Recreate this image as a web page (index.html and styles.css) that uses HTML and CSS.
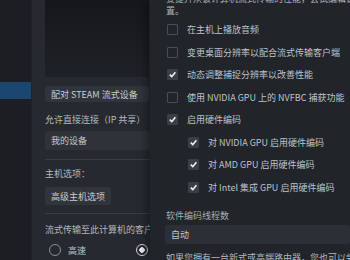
FILE: index.html
```html
<!DOCTYPE html>
<html lang="zh-CN">
<head>
    <meta charset="UTF-8">
    <title>远程畅玩设置</title>
    <link rel="stylesheet" href="styles.css">
</head>
<body>
    <div class="sidebar">
        <div class="nav-item"></div>
        <div class="nav-item"></div>
        <div class="nav-item active"></div>
    </div>

    <div class="page">
        <div class="qr-box"></div>
        <button class="btn pair">配对 STEAM 流式设备</button>
        <div class="label first">允许直接连接（IP 共享）</div>
        <div class="select">我的设备</div>
        <div class="sep"></div>
        <div class="label host">主机选项：</div>
        <button class="btn host-btn">高级主机选项</button>
        <div class="sep second"></div>
        <div class="label clients">流式传输至此计算机的客户</div>
        <div class="radios">
            <span class="radio"></span><span class="radio-text">高速</span>
            <span class="radio on"></span>
        </div>
    </div>

    <div class="dialog">
        <p class="intro">要提升从该计算机流式传输的性能，尝试编辑设<br>置。</p>

        <div class="check-row"><span class="box"></span>在主机上播放音频</div>
        <div class="check-row"><span class="box"></span>变更桌面分辨率以配合流式传输客户端</div>
        <div class="check-row"><span class="box checked"><svg viewBox="0 0 10 10"><polyline points="2,5.2 4.2,7.4 8.2,2.6"/></svg></span>动态调整捕捉分辨率以改善性能</div>
        <div class="check-row"><span class="box"></span>使用 NVIDIA GPU 上的 NVFBC 捕获功能</div>
        <div class="check-row"><span class="box checked"><svg viewBox="0 0 10 10"><polyline points="2,5.2 4.2,7.4 8.2,2.6"/></svg></span>启用硬件编码</div>
        <div class="check-row sub"><span class="box checked"><svg viewBox="0 0 10 10"><polyline points="2,5.2 4.2,7.4 8.2,2.6"/></svg></span>对 NVIDIA GPU 启用硬件编码</div>
        <div class="check-row sub"><span class="box checked"><svg viewBox="0 0 10 10"><polyline points="2,5.2 4.2,7.4 8.2,2.6"/></svg></span>对 AMD GPU 启用硬件编码</div>
        <div class="check-row sub"><span class="box checked"><svg viewBox="0 0 10 10"><polyline points="2,5.2 4.2,7.4 8.2,2.6"/></svg></span>对 Intel 集成 GPU 启用硬件编码</div>

        <div class="field-label">软件编码线程数</div>
        <div class="select wide">自动</div>
        <p class="note">如果您拥有一台新式或高端路由器，您也可以尝试调整</p>
    </div>
</body>
</html>
```

FILE: styles.css
```css
body {
    margin: 0;
    width: 350px;
    height: 260px;
    overflow: hidden;
    display: flex;
    background: #1b1d22;
    font-family: "Noto Sans CJK SC", "Noto Sans", sans-serif;
    font-size: 9px;
    color: #bfc3c9;
}

.sidebar {
    width: 31px;
    flex-shrink: 0;
    padding-top: 50px;
    background: #1c1e23;
    border-right: 1px solid #202329;
}

.nav-item {
    height: 16px;
}

.nav-item.active {
    height: 17px;
    background: #1b4670;
}

.page {
    width: 105px;
    flex-shrink: 0;
    padding: 0 0 0 13px;
    background: #262a30;
}

.qr-box {
    width: 104px;
    height: 77px;
    background: linear-gradient(to bottom, #15171a, #1e2126);
}

.btn {
    display: block;
    border: none;
    border-radius: 2px;
    background: #30343b;
    color: #c8cbd0;
    font-family: inherit;
    font-size: 9px;
    text-align: left;
    padding: 0 6px;
}

.pair {
    width: 104px;
    height: 16px;
    margin-top: 9px;
}

.label {
    height: 12px;
    line-height: 12px;
    color: #b5b9bf;
}

.label.first {
    margin-top: 12px;
}

.select {
    height: 19px;
    line-height: 19px;
    margin-top: 5px;
    padding: 0 6px;
    border-radius: 2px;
    background: #2f3339;
    color: #c3c7cd;
}

.sep {
    height: 1px;
    margin-top: 9px;
    background: #3a3e44;
}

.sep.second {
    margin-top: 8px;
}

.label.host {
    margin-top: 8px;
}

.host-btn {
    height: 18px;
    margin-top: 7px;
}

.label.clients {
    margin-top: 10px;
    white-space: nowrap;
}

.radios {
    display: flex;
    align-items: center;
    margin-top: 8px;
    height: 12px;
    padding-left: 4px;
}

.radio {
    width: 10px;
    height: 10px;
    border: 1px solid #8b9097;
    border-radius: 50%;
    flex-shrink: 0;
}

.radio-text {
    margin-left: 7px;
    flex: 1;
}

.radio.on {
    margin-right: 2px;
    background: radial-gradient(circle, #e8eaed 0 2.5px, transparent 3px);
    border-color: #d0d3d7;
}

.dialog {
    flex: 1;
    min-width: 0;
    padding-left: 15px;
    background: #212429;
    box-shadow: -4px 0 8px rgba(0, 0, 0, 0.35);
    white-space: nowrap;
    overflow: hidden;
}

.intro {
    margin: -7px 0 0 1px;
    line-height: 12px;
    color: #aeb2b8;
}

.check-row {
    display: flex;
    align-items: center;
    height: 22.5px;
    padding-left: 2px;
}

.check-row:first-of-type {
    margin-top: 1.5px;
}

.check-row.sub {
    padding-left: 23px;
}

.box {
    width: 9px;
    height: 9px;
    margin-right: 9px;
    border: 1px solid #494d55;
    border-radius: 1px;
    flex-shrink: 0;
    display: flex;
}

.box.checked {
    background: #3a3f47;
    border-color: #3a3f47;
}

.box svg {
    width: 9px;
    height: 9px;
    fill: none;
    stroke: #f2f3f5;
    stroke-width: 1.8;
}

.field-label {
    margin-top: 11.5px;
    margin-left: 1px;
    height: 12px;
    line-height: 12px;
    color: #a9adb3;
}

.select.wide {
    margin-top: 3px;
    background: #2c3036;
}

.note {
    margin: 8px 0 0 1px;
    line-height: 12px;
    color: #b3b7bd;
}
```
